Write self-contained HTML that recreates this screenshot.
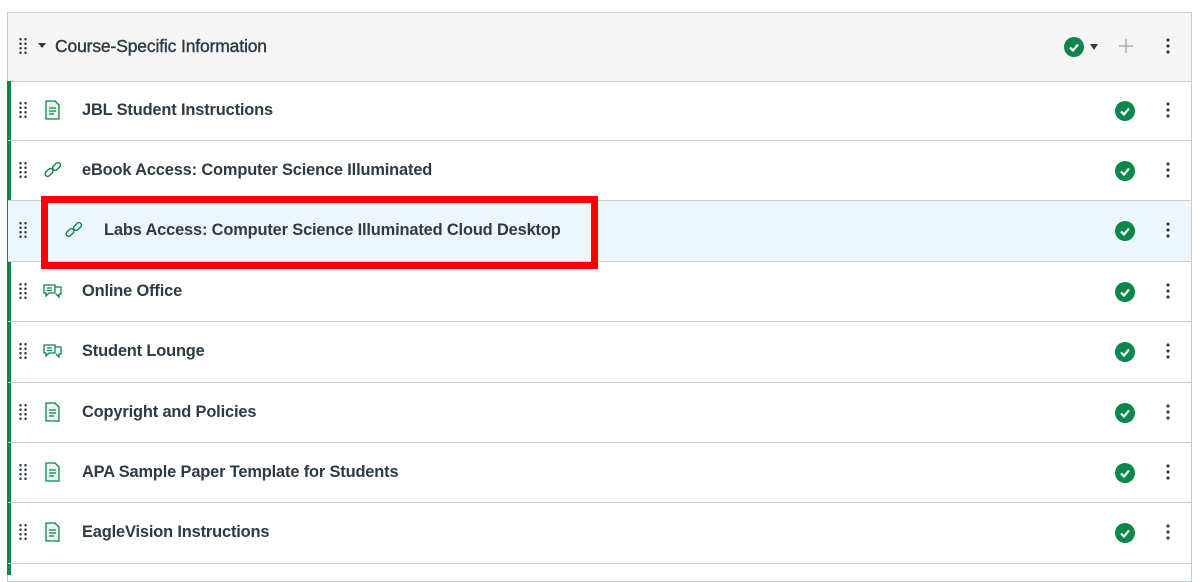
<!DOCTYPE html><html><head><style>
body{margin:0;width:1201px;height:575px;background:#fff;font-family:"Liberation Sans",sans-serif;overflow:hidden;position:relative}
.box{position:absolute;left:7px;top:12px;width:1185px;height:570px;border:1px solid #c7cdd1;box-sizing:border-box}
.hdr{position:absolute;left:8px;top:13px;width:1183px;height:68px;background:#f5f5f5;border-bottom:1px solid #c7cdd1}
.row{position:absolute;left:8px;width:1183px;height:60px;border-bottom:1px solid #c7cdd1;box-sizing:border-box}
.bar{position:absolute;left:7px;top:81px;width:4px;height:494px;background:#0b874b}
.t{position:absolute;font-size:16.4px;font-weight:bold;color:#2d3b45;white-space:nowrap;letter-spacing:-0.15px}
.grip{position:absolute;width:10px;height:18px;background-image:radial-gradient(circle,#2d3b45 1.1px,transparent 1.4px);background-size:5px 4.5px}
.chk{position:absolute;width:20px;height:20px;border-radius:50%;background:#0b874b}
.chk svg{position:absolute;left:0;top:0}
.kb{position:absolute;width:4px;height:18px;background-image:radial-gradient(circle,#2d3b45 1.5px,transparent 1.7px);background-size:4px 6px}
</style></head><body>
<div class="box"></div>
<div class="hdr"></div>
<div class="grip" style="left:18px;top:37px"></div>
<div style="position:absolute;left:38px;top:43px;border-left:4px solid transparent;border-right:4px solid transparent;border-top:5px solid #2d3b45"></div>
<div class="t" style="left:55px;top:36px;font-weight:normal;font-size:17.5px;-webkit-text-stroke:0.4px #2d3b45">Course-Specific Information</div>
<div class="chk" style="left:1064px;top:37px"><svg width="20" height="20"><path d="M6 10.5l3 3 5-6" stroke="#fff" stroke-width="2.2" fill="none"/></svg></div>
<div style="position:absolute;left:1090px;top:44px;border-left:4px solid transparent;border-right:4px solid transparent;border-top:6px solid #2d3b45"></div>
<svg style="position:absolute;left:1118px;top:38px" width="16" height="16"><path d="M8 1v14M1 8h14" stroke="#9ba3a8" stroke-width="1.3"/></svg>
<div class="kb" style="left:1166px;top:37px"></div>
<div class="bar"></div>
<div id="rows"></div>
<script>
var items=[["JBL Student Instructions","p"],["eBook Access: Computer Science Illuminated","l"],["Labs Access: Computer Science Illuminated Cloud Desktop","l"],["Online Office","d"],["Student Lounge","d"],["Copyright and Policies","p"],["APA Sample Paper Template for Students","p"],["EagleVision Instructions","p"]];
var tops=[81,141,201,262,322,383,443,503],h="";
var ic={p:'<svg width="18" height="20"><path d="M3 1h9l4 4v14H3z" fill="#eaf5ee" stroke="#0b874b" stroke-width="1.3"/><path d="M6 8h7M6 11h7M6 14h5" stroke="#0b874b" stroke-width="1.3"/></svg>',
l:'<svg width="20" height="20"><g fill="none" stroke="#0b874b" stroke-width="1.4"><rect x="1.5" y="10" width="9" height="5" rx="2.5" transform="rotate(-45 6 12.5)"/><rect x="9" y="4" width="9" height="5" rx="2.5" transform="rotate(-45 13.5 6.5)"/></g></svg>',
d:'<svg width="20" height="18"><g fill="none" stroke="#0b874b" stroke-width="1.3"><path d="M1 4h11v8H6l-3 3v-3H1z"/><path d="M12 6h6v7h-2v3l-3-3"/><path d="M4 7h5M4 9.5h5"/></g></svg>'};
items.forEach(function(it,i){var t=tops[i],b=i==2?'background:#eef6fd;':'';
var ix=i==2?64:43,tx=i==2?104:82;
h+='<div class="row" style="top:'+t+'px;height:'+((tops[i+1]||564)-t)+'px;'+b+'"></div>';
h+='<div class="grip" style="left:18px;top:'+(t+20)+'px"></div>';
h+='<div style="position:absolute;left:'+ix+'px;top:'+(t+19)+'px">'+ic[it[1]]+'</div>';
h+='<div class="t" style="left:'+tx+'px;top:'+(t+20)+'px">'+it[0]+'</div>';
h+='<div class="chk" style="left:1115px;top:'+(t+20)+'px"><svg width="20" height="20"><path d="M6 10.5l3 3 5-6" stroke="#fff" stroke-width="2.2" fill="none"/></svg></div>';
h+='<div class="kb" style="left:1166px;top:'+(t+20)+'px"></div>';});
h+='<div style="position:absolute;left:41px;top:196px;width:557px;height:73px;border:7px solid #f00;box-sizing:border-box"></div>';
document.getElementById('rows').innerHTML=h;
</script>
</body></html>
